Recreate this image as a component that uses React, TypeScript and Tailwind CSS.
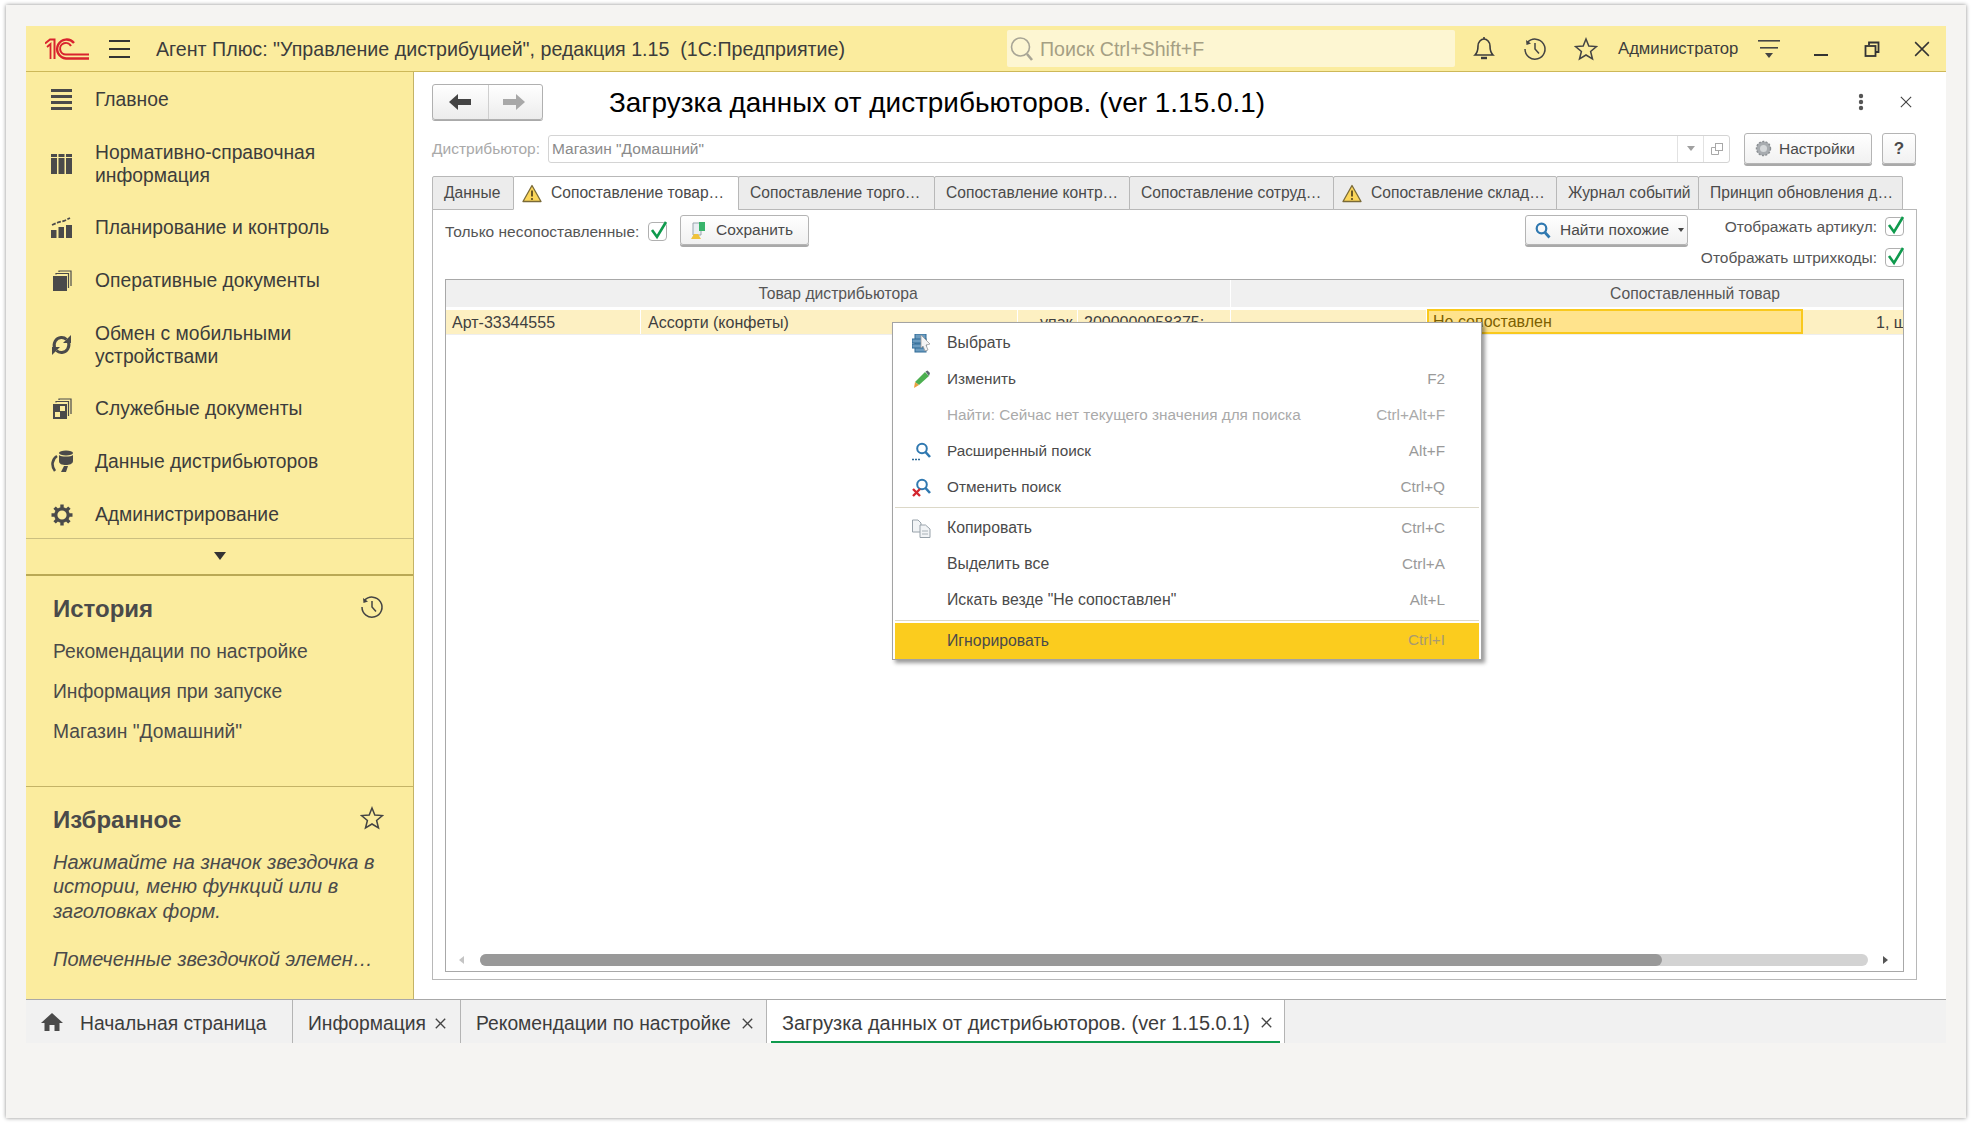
import React from 'react';

const Logo = () => (
    <svg width="44" height="22" viewBox="0 0 44 22" fill="none" stroke="#d9232e" strokeWidth="2">
        <path d="M0 5.5 L5 1.5 H9.5 V21" />
        <path d="M2 9 L5.5 6 V21" strokeWidth="1.8" />
        <path d="M29 5 A9.5 9.5 0 1 0 21 20.5 H44" strokeWidth="2.4" />
        <path d="M26 8 A5.8 5.8 0 1 0 21 16.5 H44" strokeWidth="2" />
    </svg>
);

const Bell = () => (
    <svg width="24" height="26" viewBox="0 0 24 26" fill="none" stroke="#3c3c3c" strokeWidth="1.6">
        <path d="M3 19 C6 16 6 13 6 10 C6 6 9 3 12 3 C15 3 18 6 18 10 C18 13 18 16 21 19 Z" />
        <path d="M12 1 V3" />
        <path d="M9 22 H15" strokeWidth="2.4" />
    </svg>
);

const HistoryIcon = ({ size = 24 }: { size?: number }) => (
    <svg width={size} height={size} viewBox="0 0 24 24" fill="none" stroke="#444" strokeWidth="1.5">
        <path d="M4.5 5.5 A10 10 0 1 1 2 12" />
        <path d="M3 3 L3.5 8 L8 6.5 Z" fill="#444" stroke="none" />
        <path d="M12 6 V12 L16 16.5" />
    </svg>
);

const Star = ({ size = 24 }: { size?: number }) => (
    <svg width={size} height={size} viewBox="0 0 24 24" fill="none" stroke="#444" strokeWidth="1.5">
        <path d="M12 2 L14.8 9 L22.5 9.6 L16.6 14.5 L18.5 22 L12 18 L5.5 22 L7.4 14.5 L1.5 9.6 L9.2 9 Z" />
    </svg>
);

const Warn = () => (
    <svg width="20" height="19" viewBox="0 0 20 19">
        <path d="M10 1.5 L19 17.5 H1 Z" fill="#fbd65a" stroke="#7a6a38" strokeWidth="1.3" strokeLinejoin="round" />
        <path d="M10 6.5 V12.5" stroke="#5a4a20" strokeWidth="1.8" />
        <circle cx="10" cy="15" r="1.1" fill="#5a4a20" />
    </svg>
);

const Check = () => (
    <div className="relative w-[19px] h-[19px] border border-[#b0b0b0] rounded-sm bg-white shrink-0">
        <svg className="absolute left-[1px] -top-[3px]" width="18" height="20" viewBox="0 0 18 20" fill="none">
            <path d="M2 10 L7 17 L16 2" stroke="#0f9a4d" strokeWidth="2.6" />
        </svg>
    </div>
);

const Close = ({ size = 14, color = '#444', w = 1.3 }: { size?: number; color?: string; w?: number }) => (
    <svg width={size} height={size} viewBox="0 0 14 14" fill="none" stroke={color} strokeWidth={w}>
        <path d="M1 1 L13 13 M13 1 L1 13" />
    </svg>
);

const Magnifier = () => (
    <svg width="16" height="17" viewBox="0 0 16 17" fill="none">
        <circle cx="6.5" cy="6.5" r="4.8" stroke="#2f78b0" strokeWidth="2.2" />
        <path d="M10 10.5 L14.5 15.5" stroke="#2f78b0" strokeWidth="2.8" />
    </svg>
);

const navIcons: Record<string, React.ReactNode> = {
    main: (
        <svg width="21" height="22" viewBox="0 0 21 22" fill="#4a4a4a">
            <rect y="0" width="21" height="3" /><rect y="6" width="21" height="3" /><rect y="12" width="21" height="3" /><rect y="18" width="21" height="3" />
        </svg>
    ),
    ref: (
        <svg width="21" height="22" viewBox="0 0 21 22" fill="#4a4a4a">
            <rect y="1" width="6" height="3" /><rect x="7.5" y="1" width="6" height="3" /><rect x="15" y="1" width="6" height="3" />
            <rect y="5" width="6" height="16" /><rect x="7.5" y="5" width="6" height="16" /><rect x="15" y="5" width="6" height="16" />
        </svg>
    ),
    plan: (
        <svg width="21" height="22" viewBox="0 0 21 22" fill="#4a4a4a">
            <rect y="13" width="5.5" height="8" /><rect x="7.5" y="10" width="5.5" height="11" /><rect x="15" y="8" width="6" height="13" />
            <path d="M1 8 L8 5 L13 4 L19 1" stroke="#4a4a4a" strokeWidth="1.8" strokeDasharray="4 1.5" fill="none" />
        </svg>
    ),
    ops: (
        <svg width="21" height="22" viewBox="0 0 21 22" fill="#4a4a4a">
            <rect x="2" y="6" width="14" height="15" />
            <path d="M5 4.5 V3.5 H17.5 V18" stroke="#4a4a4a" fill="none" strokeWidth="1.2" />
            <path d="M8 2 V1 H20 V16" stroke="#4a4a4a" fill="none" strokeWidth="1.2" />
        </svg>
    ),
    sync: (
        <svg width="21" height="22" viewBox="0 0 21 22" fill="none" stroke="#4a4a4a" strokeWidth="3">
            <path d="M3.5 14 C2 9 5 4 10 3.5 C12 3.3 14 4 15.5 5.5" />
            <path d="M17.5 8 C19 13 16 18 11 18.5 C9 18.7 7 18 5.5 16.5" />
            <path d="M12 9 H20 V1 Z" fill="#4a4a4a" stroke="none" />
            <path d="M9 13 H1 V21 Z" fill="#4a4a4a" stroke="none" />
        </svg>
    ),
    service: (
        <svg width="21" height="22" viewBox="0 0 21 22" fill="#4a4a4a">
            <path d="M2 6 H16 V21 H2 Z M9 8 V13 H14 V8 Z M4 14 V19 H9 V14 Z" fillRule="evenodd" />
            <path d="M5 4.5 V3.5 H17.5 V18" stroke="#4a4a4a" fill="none" strokeWidth="1.2" />
            <path d="M8 2 V1 H20 V16" stroke="#4a4a4a" fill="none" strokeWidth="1.2" />
        </svg>
    ),
    dist: (
        <svg width="23" height="23" viewBox="0 0 23 23" fill="#4a4a4a">
            <ellipse cx="15" cy="3" rx="7" ry="2.5" />
            <path d="M8 5 C10 7 20 7 22 5 V11 C22 14 18 15 15 15 C11 15 8 14 8 11 Z" />
            <path d="M6 6 C1 9 0 16 4 21" stroke="#4a4a4a" strokeWidth="2.6" fill="none" />
            <path d="M13 16 L10 22 H15 L17 16 Z" />
        </svg>
    ),
    admin: (
        <svg width="22" height="22" viewBox="0 0 22 22" fill="none">
            <circle cx="11" cy="11" r="6.2" stroke="#4a4a4a" strokeWidth="3.2" />
            <path d="M11 0.5 V4 M11 18 V21.5 M0.5 11 H4 M18 11 H21.5 M3.6 3.6 L6 6 M16 16 L18.4 18.4 M18.4 3.6 L16 6 M6 16 L3.6 18.4" stroke="#4a4a4a" strokeWidth="3.4" />
        </svg>
    ),
};

const navItems = [
    { key: 'main', lines: ['Главное'] },
    { key: 'ref', lines: ['Нормативно-справочная', 'информация'] },
    { key: 'plan', lines: ['Планирование и контроль'] },
    { key: 'ops', lines: ['Оперативные документы'] },
    { key: 'sync', lines: ['Обмен с мобильными', 'устройствами'] },
    { key: 'service', lines: ['Служебные документы'] },
    { key: 'dist', lines: ['Данные дистрибьюторов'] },
    { key: 'admin', lines: ['Администрирование'] },
];

const Sidebar = () => (
    <aside className="w-[388px] shrink-0 bg-[#fbec9e] border-r border-[#c4b366] flex flex-col text-[#3c3c3c]">
        <nav className="h-[466px] overflow-hidden pt-px">
            {navItems.map((item) => (
                <div key={item.key} className={`flex items-center pl-[25px] ${item.lines.length > 1 ? 'h-[75px]' : 'h-[53px]'}`}>
                    <div className="w-[44px] shrink-0">{navIcons[item.key]}</div>
                    <div className="text-[19.3px] leading-[23px] whitespace-nowrap">
                        {item.lines.map((l) => <div key={l}>{l}</div>)}
                    </div>
                </div>
            ))}
        </nav>
        <div className="h-[36px] pb-[2px] border-t border-[#cbbf80] flex items-center justify-center">
            <div className="w-0 h-0 border-x-[6.5px] border-x-transparent border-t-[8px] border-t-[#333]" />
        </div>
        <div className="h-[2px] bg-[#b9a854]" />
        <section className="h-[210px] pl-[27px] pr-[29px] pt-[19px] text-[#4a4a4a]">
            <div className="flex items-center justify-between h-[28px]">
                <span className="text-[24px] font-bold">История</span>
                <div className="-mt-[5px]"><HistoryIcon /></div>
            </div>
            <div className="mt-[9px] text-[19.3px] whitespace-nowrap">
                <div className="h-[40px] flex items-center">Рекомендации по настройке</div>
                <div className="h-[40px] flex items-center">Информация при запуске</div>
                <div className="h-[40px] flex items-center">Магазин "Домашний"</div>
            </div>
        </section>
        <section className="flex-1 border-t border-[#c4b366] pl-[27px] pr-[29px] pt-[19px] text-[#4a4a4a]">
            <div className="flex items-center justify-between h-[28px]">
                <span className="text-[24px] font-bold">Избранное</span>
                <div className="-mt-[5px]"><Star /></div>
            </div>
            <div className="mt-[16px] text-[20px] italic leading-[24.3px] whitespace-nowrap">
                <div>Нажимайте на значок звездочка в</div>
                <div>истории, меню функций или в</div>
                <div>заголовках форм.</div>
                <div className="mt-[24px]">Помеченные звездочкой элемен…</div>
            </div>
        </section>
    </aside>
);

const tabs = [
    { label: 'Данные', w: 'w-[82px]' },
    { label: 'Сопоставление товар…', w: 'w-[226px]', warn: true, active: true },
    { label: 'Сопоставление торго…', w: 'w-[197px]' },
    { label: 'Сопоставление контр…', w: 'w-[196px]' },
    { label: 'Сопоставление сотруд…', w: 'w-[205px]' },
    { label: 'Сопоставление склад…', w: 'w-[224px]', warn: true },
    { label: 'Журнал событий', w: 'w-[143px]' },
    { label: 'Принцип обновления д…', w: 'w-[205px]' },
];

const btn = 'flex items-center h-[31px] bg-gradient-to-b from-white to-[#f1f1f1] border border-[#b4b4b4] rounded-[3px] shadow-[0_2px_0_#a9a9a9] text-[15.5px] text-[#4a4a4a] whitespace-nowrap';

const Form = () => (
    <main className="flex-1 bg-white pl-[18px] pt-[12px] flex flex-col">
        {/* title row */}
        <div className="flex items-center h-[36px]">
            <div className="flex w-[111px] h-[36px] border border-[#b0b0b0] rounded-[3px] bg-gradient-to-b from-white to-[#ececec] shadow-[0_1px_0_#aaa]">
                <div className="w-[56px] pr-[2px] border-r border-[#cfcfcf] flex items-center justify-center">
                    <svg width="22" height="16" viewBox="0 0 22 16" fill="#444"><path d="M0 8 L9 0 V5 H22 V11 H9 V16 Z" /></svg>
                </div>
                <div className="flex-1 pr-[3px] flex items-center justify-center">
                    <svg width="22" height="16" viewBox="0 0 22 16" fill="#a8a8a8"><path d="M22 8 L13 0 V5 H0 V11 H13 V16 Z" /></svg>
                </div>
            </div>
            <h1 className="ml-[66px] mt-[2px] text-[27.9px] text-black leading-none whitespace-nowrap">Загрузка данных от дистрибьюторов. (ver 1.15.0.1)</h1>
            <div className="ml-auto mr-[34px] flex items-center gap-[36px]">
                <svg width="6" height="18" viewBox="0 0 6 18" fill="#555"><circle cx="3" cy="3" r="2.2" /><circle cx="3" cy="9" r="2.2" /><circle cx="3" cy="15" r="2.2" /></svg>
                <Close size={12} />
            </div>
        </div>
        {/* distributor row */}
        <div className="flex items-center h-[31px] mt-[13px] text-[15.5px]">
            <span className="w-[116px] text-[#a9a9a9] whitespace-nowrap">Дистрибьютор:</span>
            <div className="w-[1182px] h-[28px] border border-[#d4d4d4] rounded-[3px] flex items-center text-[#8a8a8a]">
                <span className="pl-[3px] flex-1">Магазин "Домашний"</span>
                <div className="w-[26px] h-full border-l border-[#e2e2e2] flex items-center justify-center">
                    <div className="w-0 h-0 border-x-[4px] border-x-transparent border-t-[5px] border-t-[#a0a0a0]" />
                </div>
                <div className="w-[26px] h-full border-l border-[#e2e2e2] flex items-center justify-center">
                    <svg width="14" height="14" viewBox="0 0 14 14" fill="none" stroke="#a8a8a8"><rect x="5.5" y="1.5" width="7" height="7" /><path d="M5.5 5.5 H1.5 V12.5 H8.5 V8.5" /></svg>
                </div>
            </div>
            <button className={`${btn} ml-[14px] w-[128px] pl-[10px]`}>
                <svg width="17" height="17" viewBox="0 0 17 17"><circle cx="8.5" cy="8.5" r="7" fill="#a8acb0" /><circle cx="8.5" cy="8.5" r="3.5" fill="#d5d8da" /><circle cx="8.5" cy="8.5" r="7" fill="none" stroke="#8a8e92" strokeWidth="1.4" strokeDasharray="2 1.5" /></svg>
                <span className="ml-[7px]">Настройки</span>
            </button>
            <button className={`${btn} ml-[10px] w-[34px] justify-center font-bold !text-[17px]`}>?</button>
        </div>
        {/* tabs */}
        <div className="flex mt-[12px] text-[15.6px] text-[#4a4a4a] relative z-10">
            {tabs.map((t) => (
                <div key={t.label} className={`${t.w} h-[34px] -mr-px flex items-center border border-[#b8b8b8] rounded-t-[2px] whitespace-nowrap ${t.active ? 'bg-white border-b-white' : 'bg-[#ececec]'} ${t.warn ? 'pl-[8px]' : 'pl-[11px]'}`}>
                    {t.warn && <span className="mr-[9px] shrink-0"><Warn /></span>}
                    {t.label}
                </div>
            ))}
        </div>
        {/* panel */}
        <div className="w-[1485px] h-[771px] -mt-px border border-[#b8b8b8] px-[12px] pt-[5px] text-[15.5px] text-[#555] whitespace-nowrap">
            <div className="flex justify-between h-[64px]">
                <div className="flex items-start">
                    <span className="mt-[5px] w-[196px]">Только несопоставленные:</span>
                    <span className="ml-[7px] mt-[7px]"><Check /></span>
                    <button className={`${btn} ml-[13px] w-[129px] pl-[9px] !h-[30px]`}>
                        <svg width="18" height="19" viewBox="0 0 18 19">
                            <path d="M3 2 H11 V14 H3 Z" fill="#e9eef2" stroke="#9aa5ad" />
                            <path d="M9 1 H15 V10 H9 Z" fill="#38b36a" />
                            <path d="M1 18 L4 13 H8 L11 18 Z" fill="#efc33c" />
                        </svg>
                        <span className="ml-[8px]">Сохранить</span>
                    </button>
                </div>
                <div className="flex items-start">
                    <button className={`${btn} w-[163px] pl-[9px] !h-[30px]`}>
                        <Magnifier />
                        <span className="ml-[9px]">Найти похожие</span>
                        <div className="ml-[9px] w-0 h-0 border-x-[3.5px] border-x-transparent border-t-[4px] border-t-[#444]" />
                    </button>
                    <div className="ml-[12px] w-[204px]">
                        <div className="flex justify-end items-center h-[19px] mt-[2px] gap-[8px]"><span>Отображать артикул:</span><Check /></div>
                        <div className="flex justify-end items-center h-[19px] mt-[12px] gap-[8px]"><span>Отображать штрихкоды:</span><Check /></div>
                    </div>
                </div>
            </div>
            {/* table */}
            <div className="w-[1459px] h-[693px] border border-[#a8a8a8] flex flex-col overflow-hidden">
                <div className="flex h-[27px] bg-[#f0f0f0] shrink-0 text-center text-[15.7px]">
                    <div className="w-[785px] shrink-0 border-r border-white leading-[27px]">Товар дистрибьютора</div>
                    <div className="w-[928px] shrink-0 leading-[27px]">Сопоставленный товар</div>
                </div>
                <div className="flex h-[25px] mt-[3px] bg-[#fdf0c2] shrink-0 text-[16px] text-[#3f3f3f] border-b border-[#eee] leading-[25px]">
                    <div className="w-[195px] pl-[6px] border-r border-white">Арт-33344555</div>
                    <div className="w-[377px] pl-[7px] border-r border-white">Ассорти (конфеты)</div>
                    <div className="w-[60px] text-right border-r border-white">упак.</div>
                    <div className="w-[153px] pl-[6px] border-r border-white overflow-hidden">2000000058375;</div>
                    <div className="w-[196px] border-r border-white" />
                    <div className="w-[376px] h-[25px] -mt-px pl-[4px] border-[2.5px] border-[#f9c91d] bg-[#ffe38c] text-[#7d5f00] leading-[21px]">Не сопоставлен</div>
                    <div className="flex-1 pl-[73px] overflow-hidden">1, шт</div>
                </div>
                <div className="mt-auto mb-[5px] flex items-center h-[12px] pl-[13px]">
                    <div className="w-0 h-0 border-y-[4px] border-y-transparent border-r-[5px] border-r-[#c4c4c4]" />
                    <div className="ml-[16px] w-[1388px] h-[12px] rounded-[6px] bg-[#d3d3d3]">
                        <div className="w-[1182px] h-[12px] rounded-[6px] bg-[#999]" />
                    </div>
                    <div className="ml-[15px] w-0 h-0 border-y-[4px] border-y-transparent border-l-[5px] border-l-[#555]" />
                </div>
            </div>
        </div>
    </main>
);

const BottomTabs = () => (
    <footer className="h-[44px] bg-[#f1f1f1] border-t border-[#a8a8a8] flex text-[19.3px] text-[#3c3c3c] whitespace-nowrap">
        <div className="w-[267px] pt-[6px] border-r border-[#b4b4b4] flex items-center pl-[15px]">
            <svg className="-mt-[6px]" width="22" height="20" viewBox="0 0 22 20" fill="#4a4a4a"><path d="M11 1 L22 11 H18.5 V19 H13.5 V13 H8.5 V19 H3.5 V11 H0 Z" /></svg>
            <span className="ml-[17px]">Начальная страница</span>
        </div>
        <div className="w-[168px] pt-[6px] border-r border-[#b4b4b4] flex items-center pl-[15px]">
            <span>Информация</span>
            <span className="ml-[9px] -mt-[2px]"><Close size={11} w={1.7} /></span>
        </div>
        <div className="w-[306px] pt-[6px] border-r border-[#b4b4b4] flex items-center pl-[15px]">
            <span>Рекомендации по настройке</span>
            <span className="ml-[11px] -mt-[2px]"><Close size={11} w={1.7} /></span>
        </div>
        <div className="w-[518px] border-r border-[#b4b4b4] bg-white px-[4px]">
            <div className="h-full pt-[6px] border-b-[2.5px] border-[#0f9a4d] flex items-center pl-[11px] text-[19.9px]">
                <span>Загрузка данных от дистрибьюторов. (ver 1.15.0.1)</span>
                <span className="ml-[11px] -mt-[2px]"><Close size={11} w={1.7} /></span>
            </div>
        </div>
    </footer>
);

const Sep = ({ h }: { h: string }) => <div className={`${h} flex items-center`}><div className="w-full h-px bg-[#dcd8c8]" /></div>;

const menuIcons: Record<string, React.ReactNode> = {
    pick: (
        <svg width="19" height="19" viewBox="0 0 19 19">
            <rect x="3" y="0" width="11" height="18" fill="#6c9cc0" stroke="#2f6a96" />
            <rect x="0" y="5" width="14" height="4" fill="#6c9cc0" stroke="#2f6a96" />
            <rect x="0" y="10" width="14" height="4" fill="#6c9cc0" stroke="#2f6a96" />
            <path d="M9 1 L18 10 L14 11 L16 16 L13 17 L11 12 L9 14 Z" fill="#f4f4f4" stroke="#999" strokeWidth="0.8" />
        </svg>
    ),
    edit: (
        <svg width="19" height="19" viewBox="0 0 19 19">
            <path d="M13 2 L17 6 L7 15 L3 12 Z" fill="#4caf50" />
            <path d="M13.5 1.5 L15.5 0.5 L18 3 L17 6 Z" fill="#5c6770" />
            <path d="M3 12 L7 15 L2 18 Z" fill="#e8a040" />
        </svg>
    ),
    search: (
        <svg width="19" height="19" viewBox="0 0 19 19" fill="none">
            <circle cx="10" cy="6.5" r="4.8" stroke="#2f78b0" strokeWidth="2" />
            <path d="M13.5 10 L18 15" stroke="#2f78b0" strokeWidth="2.6" />
            <path d="M0 17.5 H8" stroke="#2f6a96" strokeWidth="1.6" strokeDasharray="2 1" />
        </svg>
    ),
    cancel: (
        <svg width="19" height="19" viewBox="0 0 19 19" fill="none">
            <circle cx="10" cy="6.5" r="4.8" stroke="#2f78b0" strokeWidth="2" />
            <path d="M13.5 10 L18 15" stroke="#2f78b0" strokeWidth="2.6" />
            <path d="M1 11 L8 18 M8 11 L1 18" stroke="#d3262e" strokeWidth="2.4" />
        </svg>
    ),
    copy: (
        <svg width="19" height="19" viewBox="0 0 19 19" fill="#f2f4f6" stroke="#98a2aa">
            <path d="M0.5 1 H6 L9 4 V13 H0.5 Z" />
            <path d="M8 6 H13.5 L18 10 V18.5 H8 Z" />
            <path d="M10 12 H16 M10 15 H16" strokeWidth="0.8" />
        </svg>
    ),
};

const MenuRow = ({ icon, label, hint, disabled, wide }: { icon?: string; label: string; hint?: string; disabled?: boolean; wide?: boolean }) => (
    <div className="flex items-center h-[36px] pl-[17px] pr-[34px]">
        <div className="w-[35px] shrink-0">{icon && menuIcons[icon]}</div>
        <span className={`${disabled ? 'text-[#aaa]' : 'text-[#4a4a4a]'} ${wide ? 'text-[15.8px]' : ''}`}>{label}</span>
        {hint && <span className={`ml-auto ${disabled ? 'text-[#aaa]' : 'text-[#9a9a9a]'}`}>{hint}</span>}
    </div>
);

const ContextMenu = () => (
    <div className="absolute left-[892px] top-[322px] w-[590px] h-[338px] bg-white border-[1.5px] border-[#a3a3a3] shadow-[3px_3px_4px_rgba(0,0,0,0.4)] px-[2px] pt-[2px] text-[15.3px] z-20">
        <MenuRow icon="pick" label="Выбрать" wide />
        <MenuRow icon="edit" label="Изменить" hint="F2" />
        <MenuRow label="Найти: Сейчас нет текущего значения для поиска" hint="Ctrl+Alt+F" disabled />
        <MenuRow icon="search" label="Расширенный поиск" hint="Alt+F" />
        <MenuRow icon="cancel" label="Отменить поиск" hint="Ctrl+Q" />
        <Sep h="h-[5px]" />
        <MenuRow icon="copy" label="Копировать" hint="Ctrl+C" wide />
        <MenuRow label="Выделить все" hint="Ctrl+A" wide />
        <MenuRow label={'Искать везде "Не сопоставлен"'} hint="Alt+L" wide />
        <Sep h="h-[5px]" />
        <div className="flex items-center h-[36px] pb-[1px] pl-[52px] pr-[34px] bg-[#fbcc1e] text-[#4a4a4a]">
            <span className="text-[15.8px]">Игнорировать</span>
            <span className="ml-auto text-[#a89a70]">Ctrl+I</span>
        </div>
    </div>
);

const App = () => {
    return (
        <div className="relative w-[1972px] h-[1124px] bg-white pl-[6px] pt-[5px] overflow-hidden font-['Liberation_Sans',Arial,sans-serif]">
            <div className="w-[1960px] h-[1113px] bg-[#f5f4f2] shadow-[0_0_4px_rgba(0,0,0,0.45)] pl-[20px] pt-[21px]">
                <div className="w-[1920px] h-[1017px] flex flex-col">
                    {/* header */}
                    <header className="h-[46px] shrink-0 bg-[#fbec9e] border-b border-[#cdb859] flex items-center text-[#3c3c3c]">
                        <div className="ml-[19px] mt-[1px]"><Logo /></div>
                        <div className="ml-[20px] mt-[1px] w-[21px] flex flex-col gap-[6.5px]">
                            <div className="h-[1.5px] bg-[#333]" /><div className="h-[1.5px] bg-[#333]" /><div className="h-[1.5px] bg-[#333]" />
                        </div>
                        <div className="ml-[26px] mt-[3px] w-[851px] text-[19.65px] whitespace-pre">Агент Плюс: "Управление дистрибуцией", редакция 1.15  (1С:Предприятие)</div>
                        <div className="w-[448px] h-[37px] bg-[#fdf6d2] rounded-[2px] flex items-center pl-[3px] text-[19.6px] text-[#a59f84] whitespace-nowrap">
                            <svg width="24" height="26" viewBox="0 0 24 26" fill="none">
                                <circle cx="10.5" cy="11" r="9" stroke="#a8a595" strokeWidth="1.6" />
                                <path d="M17 18 L22 24" stroke="#a8a595" strokeWidth="2.6" />
                            </svg>
                            <span className="ml-[6px] mt-[2px]">Поиск Ctrl+Shift+F</span>
                        </div>
                        <div className="ml-[17px]"><Bell /></div>
                        <div className="ml-[27px]"><HistoryIcon /></div>
                        <div className="ml-[27px]"><Star /></div>
                        <span className="ml-[20px] w-[119px] text-[16.7px] whitespace-nowrap">Администратор</span>
                        <svg className="ml-[21px]" width="22" height="20" viewBox="0 0 22 20" fill="#444">
                            <rect width="22" height="1.6" y="1" /><rect x="2" width="18" height="1.6" y="8" />
                            <path d="M7 14 H15 L11 19 Z" />
                        </svg>
                        <div className="ml-[34px] mt-[13px] w-[14px] h-[2.5px] bg-[#333]" />
                        <svg className="ml-[36px]" width="16" height="16" viewBox="0 0 16 16" fill="none" stroke="#333" strokeWidth="1.8">
                            <rect x="1.5" y="5" width="10" height="10" /><path d="M5 4 V1.5 H14.5 V11 H12" />
                        </svg>
                        <div className="ml-[34px]"><Close size={16} color="#333" /></div>
                    </header>
                    <div className="flex flex-1 min-h-0">
                        <Sidebar />
                        <Form />
                    </div>
                    <BottomTabs />
                </div>
            </div>
            <ContextMenu />
        </div>
    );
};

export default App;
